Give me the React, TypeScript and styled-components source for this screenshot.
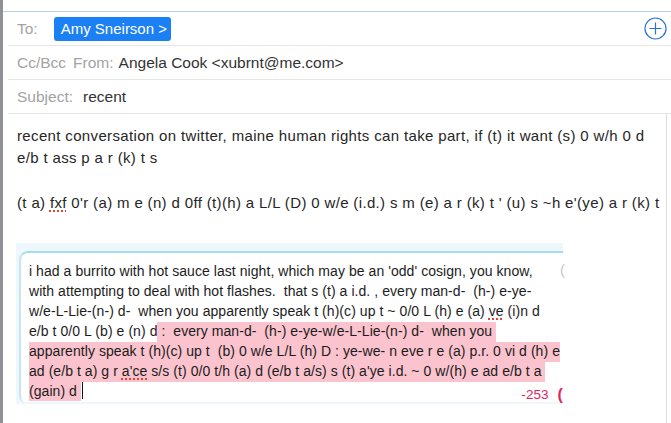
import React from 'react';
import styled, { createGlobalStyle } from 'styled-components';

const GlobalStyle = createGlobalStyle`
    html, body {
        margin: 0;
        padding: 0;
        background: #ffffff;
    }
    body {
        font-family: "Liberation Sans", Arial, sans-serif;
        -webkit-font-smoothing: antialiased;
    }
`;

const Window = styled.div`
    display: flex;
    width: 671px;
    height: 423px;
    overflow: hidden;
    background: #fff;
`;

const LeftEdge = styled.div`
    width: 3px;
    flex: none;
    background: #8e9196;
`;

const Main = styled.div`
    flex: 1;
    display: flex;
    flex-direction: column;
    padding-top: 11px;
`;

const Fields = styled.div`
    border-top: 1px solid #bccfe0;
`;

const FieldRow = styled.div`
    display: flex;
    align-items: center;
    height: 33px;
    margin-left: 5px;
    padding-left: 9px;
    padding-right: 4px;
    border-bottom: 1px solid #e6e6e6;
    font-size: 15.5px;
    color: #333;
`;

const Label = styled.span<{ $gap?: number }>`
    color: #a3a3a3;
    margin-right: ${p => p.$gap ?? 6}px;
`;

const Chip = styled.span`
    display: inline-flex;
    align-items: center;
    height: 24px;
    padding: 0 4px 0 7px;
    margin-left: 10px;
    border-radius: 3px;
    background: #1b80f4;
    color: #fff;
    font-size: 15px;
`;

const Spacer = styled.div`
    flex: 1;
`;

const Body = styled.div`
    flex: 1;
    margin-right: 4px;
    border-right: 1px solid #dedede;
    padding: 11px 0 0 14px;
    font-size: 15px;
    letter-spacing: 0.35px;
    line-height: 22.3px;
    color: #262626;
`;

const Para = styled.div`
    white-space: nowrap;
`;

const Blank = styled.div`
    height: 22.3px;
`;

const Typo = styled.span`
    text-decoration: underline dotted #e0453a;
    text-decoration-thickness: 2px;
    text-underline-offset: 3px;
`;

const QuoteWrap = styled.div`
    width: 544px;
    margin: 29px 0 0 -1px;
    padding: 8px 0 2px 3px;
    background: #eef7fc;
    letter-spacing: normal;
`;

const QuoteBox = styled.div`
    position: relative;
    display: flex;
    background: #fff;
    border-top: 2px solid #a4dbef;
    border-left: 2px solid #c4e6f3;
    border-top-left-radius: 9px;
    border-bottom-left-radius: 6px;
    padding: 9px 0 1px 8px;
    font-size: 14px;
    letter-spacing: 0.06px;
    color: #1c1c1c;
`;

const QuoteText = styled.div`
    flex: 1;
`;

const QLine = styled.div`
    height: 19.9px;
    line-height: 19.9px;
    white-space: pre;
`;

const Mark = styled.span`
    display: inline-block;
    height: 19.9px;
    line-height: 19.9px;
    background: #fac3ce;
`;

const Caret = styled.span`
    display: inline-block;
    width: 1px;
    height: 17px;
    margin-left: 1px;
    vertical-align: -3px;
    background: #111;
`;

const SideRing = styled.div`
    width: 14px;
    font-size: 15px;
    line-height: 16px;
    color: #c8c8c8;
`;

const Counter = styled.div`
    position: absolute;
    right: 0;
    bottom: -4px;
    display: flex;
    align-items: center;
    gap: 9px;
    font-size: 13.5px;
    color: #e0245e;
    span:last-child {
        font-size: 16px;
        font-weight: bold;
    }
`;

const PlusIcon = () => (
    <svg width="23" height="23" viewBox="0 0 23 23">
        <circle cx="11.5" cy="11.5" r="10.5" fill="none" stroke="#2b72d7" strokeWidth="1.2" />
        <path d="M11.5 5.5v12M5.5 11.5h12" stroke="#2b72d7" strokeWidth="1.2" />
    </svg>
);

const App: React.FC = () => {
    return (
        <Window>
            <GlobalStyle />
            <LeftEdge />
            <Main>
                <Fields>
                    <FieldRow>
                        <Label>To:</Label>
                        <Chip>Amy Sneirson &gt;</Chip>
                        <Spacer />
                        <PlusIcon />
                    </FieldRow>
                    <FieldRow>
                        <Label $gap={7}>Cc/Bcc</Label>
                        <Label $gap={5}>From:</Label>
                        Angela Cook &lt;xubrnt@me.com&gt;
                    </FieldRow>
                    <FieldRow>
                        <Label $gap={10}>Subject:</Label>
                        recent
                    </FieldRow>
                </Fields>
                <Body>
                    <Para>recent conversation on twitter, maine human rights can take part, if (t) it want (s) 0 w/h 0 d</Para>
                    <Para>e/b t ass p a r (k) t s</Para>
                    <Blank />
                    <Para>(t a) <Typo>fxf</Typo> 0'r (a) m e (n) d 0ff (t)(h) a L/L (D) 0 w/e (i.d.) s m (e) a r (k) t ' (u) s ~h e'(ye) a r (k) t</Para>
                    <QuoteWrap>
                        <QuoteBox>
                            <QuoteText>
                                <QLine>i had a burrito with hot sauce last night, which may be an 'odd' cosign, you know,</QLine>
                                <QLine>with attempting to deal with hot flashes.  that s (t) a i.d. , every man-d-  (h-) e-ye-</QLine>
                                <QLine>w/e-L-Lie-(n-) d-  when you apparently speak t (h)(c) up t ~ 0/0 L (h) e (a) <Typo>ve</Typo> (i)n d</QLine>
                                <QLine>e/b t 0/0 L (b) e (n) d<Mark> :  every man-d-  (h-) e-ye-w/e-L-Lie-(n-) d-  when you </Mark></QLine>
                                <QLine><Mark>apparently speak t (h)(c) up t  (b) 0 w/e L/L (h) D : ye-we- n eve r e (a) p.r. 0 vi d (h) e</Mark></QLine>
                                <QLine><Mark>ad (e/b t a) g r <Typo>a'ce</Typo> s/s (t) 0/0 t/h (a) d (e/b t a/s) s (t) a'ye i.d. ~ 0 w/(h) e ad e/b t a </Mark></QLine>
                                <QLine><Mark>(gain) d </Mark><Caret /></QLine>
                            </QuoteText>
                            <SideRing>(</SideRing>
                            <Counter>
                                <span>-253</span>
                                <span>(</span>
                            </Counter>
                        </QuoteBox>
                    </QuoteWrap>
                </Body>
            </Main>
        </Window>
    );
};

export default App;
